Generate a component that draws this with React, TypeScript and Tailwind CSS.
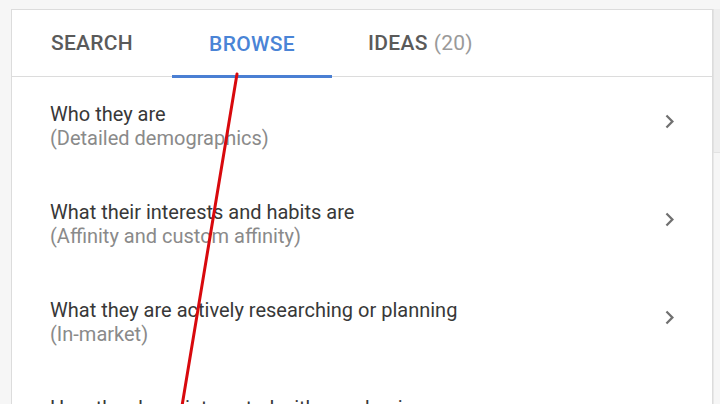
import React from "react";

const rows = [
  { title: "Who they are", sub: "(Detailed demographics)" },
  { title: "What their interests and habits are", sub: "(Affinity and custom affinity)" },
  { title: "What they are actively researching or planning", sub: "(In-market)" },
  { title: "How they have interacted with your business", sub: "" },
];

function Chevron() {
  return (
    <svg width="27" height="27" viewBox="0 0 24 24" className="shrink-0 -mt-[10px]">
      <path d="M10 6L8.59 7.41 13.17 12l-4.58 4.59L10 18l6-6z" fill="#707070" />
    </svg>
  );
}

export default function App() {
  return (
    <div
      className="relative w-[720px] h-[404px] overflow-hidden bg-[#f6f6f6] flex items-start pt-[9px] pl-[11px]"
      style={{ fontFamily: "Roboto, 'Liberation Sans', sans-serif" }}
    >
      <div className="w-[702px] shrink-0 bg-white border border-[#dcdcdc] flex flex-col">
        <div className="flex shrink-0 h-[67px] border-b border-[#dcdcdc]">
          <div className="min-w-[160px] px-9 pt-[1px] flex items-center justify-center text-[21px] font-medium text-[#5a5a5a] tracking-[0.3px]">
            SEARCH
          </div>
          <div className="min-w-[160px] px-9 flex items-center justify-center text-[21px] font-medium text-[#4a84d6] border-b-[3px] border-[#4a7fd3] -mb-[2px] pt-[4px] tracking-[0.3px]">
            BROWSE
          </div>
          <div className="min-w-[160px] px-9 pt-[1px] flex items-center justify-center text-[21px] font-medium text-[#5a5a5a] tracking-[0.3px]">
            IDEAS<span className="ml-[6px] font-normal text-[#9a9a9a]">(20)</span>
          </div>
        </div>
        <div className="flex flex-col">
          {rows.map((r) => (
            <div key={r.title} className="flex shrink-0 items-center pl-[38px] pr-[29px] py-[25px]">
              <div className="flex-1 text-[20px] leading-[24px]">
                <div className="text-[#383838]">{r.title}</div>
                <div className="text-[#8a8a8a] h-[24px]">{r.sub}</div>
              </div>
              <Chevron />
            </div>
          ))}
        </div>
      </div>
      <div className="w-[7px] h-[395px] shrink-0 flex flex-col">
        <div className="h-[144px] bg-[#eeeeee] border-l border-[#e2e2e2] border-b"></div>
        <div className="flex-1 border-l border-[#e8e8e8]"></div>
      </div>
      <svg className="absolute inset-0 pointer-events-none" width="720" height="404" viewBox="0 0 720 404">
        <line x1="237" y1="74" x2="182" y2="406" stroke="#d8090d" strokeWidth="3" strokeLinecap="round" />
      </svg>
    </div>
  );
}
